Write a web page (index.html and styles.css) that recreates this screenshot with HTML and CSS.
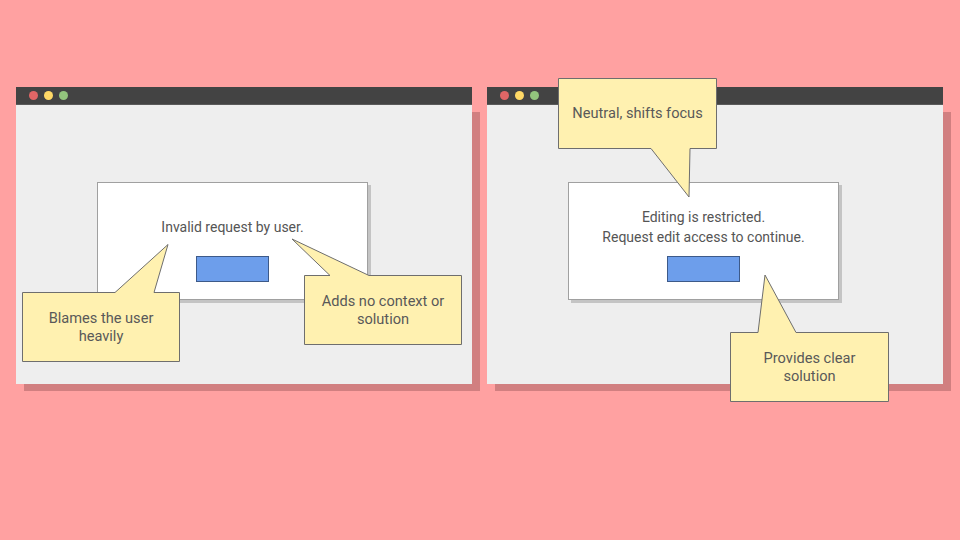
FILE: index.html
```html
<!DOCTYPE html>
<html>
<head>
<meta charset="utf-8">
<link rel="stylesheet" href="styles.css">
</head>
<body>
<div class="stage">
  <div class="window">
    <div class="bar">
      <span class="dot red"></span><span class="dot yellow"></span><span class="dot green"></span>
    </div>
    <div class="content">
      <div class="dialog">
        <div class="msg">Invalid request by user.</div>
        <div class="btn"></div>
      </div>
    </div>
    <div class="callout c1">
      <svg class="shape" width="158" height="70"><polygon points="0.5,0.5 93,0.5 146,-47.5 132,0.5 157.5,0.5 157.5,69.5 0.5,69.5"/></svg>
      <span class="ctext">Blames the user<br>heavily</span>
    </div>
    <div class="callout c2">
      <svg class="shape" width="158" height="70"><polygon points="0.5,0.5 26,0.5 -12,-36 65,0.5 157.5,0.5 157.5,69.5 0.5,69.5"/></svg>
      <span class="ctext">Adds no context or<br>solution</span>
    </div>
  </div>
  <div class="window">
    <div class="bar">
      <span class="dot red"></span><span class="dot yellow"></span><span class="dot green"></span>
    </div>
    <div class="content">
      <div class="dialog">
        <div class="msg">Editing is restricted.<br>Request edit access to continue.</div>
        <div class="btn"></div>
      </div>
    </div>
    <div class="callout c3">
      <svg class="shape" width="159" height="71"><polygon points="0.5,0.5 158.5,0.5 158.5,70.5 132,70.5 131,119 93,70.5 0.5,70.5"/></svg>
      <span class="ctext">Neutral, shifts focus</span>
    </div>
    <div class="callout c4">
      <svg class="shape" width="159" height="70"><polygon points="0.5,0.5 28,0.5 35,-57 66,0.5 158.5,0.5 158.5,69.5 0.5,69.5"/></svg>
      <span class="ctext">Provides clear<br>solution</span>
    </div>
  </div>
</div>
</body>
</html>
```
FILE: styles.css
```css
html, body {
  margin: 0;
  padding: 0;
}
body {
  width: 960px;
  height: 540px;
  background: #ffa1a1;
  font-family: Roboto, "Liberation Sans", sans-serif;
  overflow: hidden;
}
.stage {
  display: flex;
  gap: 15px;
  padding: 87px 0 0 16px;
}
.window {
  position: relative;
  width: 456px;
}
.bar {
  height: 18px;
  background: #434343;
  display: flex;
  align-items: center;
  gap: 6px;
  padding-left: 13px;
  box-sizing: border-box;
  border-bottom: 1px solid #5a5a5a;
}
.dot {
  width: 9px;
  height: 9px;
  border-radius: 50%;
}
.red { background: #e06666; }
.yellow { background: #ffd966; }
.green { background: #93c47d; }
.content {
  height: 279px;
  background: #eeeeee;
  box-shadow: 8px 7px 0 #d17f80;
  padding: 77px 0 0 81px;
  box-sizing: border-box;
}
.dialog {
  width: 271px;
  height: 118px;
  box-sizing: border-box;
  background: #ffffff;
  border: 1px solid #a0a0a0;
  box-shadow: 3px 3px 0 #c4c4c4;
  display: flex;
  flex-direction: column;
  align-items: center;
  padding-top: 19px;
}
.msg {
  height: 50px;
  display: flex;
  align-items: center;
  text-align: center;
  font-size: 14px;
  line-height: 20px;
  color: #555555;
}
.btn {
  margin-top: 4px;
  width: 73px;
  height: 26px;
  box-sizing: border-box;
  background: #6d9eeb;
  border: 1px solid #3d5a89;
}
.callout {
  position: absolute;
  display: flex;
  align-items: center;
  justify-content: center;
  text-align: center;
  z-index: 2;
}
.shape {
  position: absolute;
  left: 0;
  top: 0;
  overflow: visible;
}
.shape polygon {
  fill: #fff1b0;
  stroke: #6e6e6e;
  stroke-width: 1;
}
.ctext {
  position: relative;
  font-size: 14.6px;
  line-height: 18.5px;
  color: #595959;
}
.c1 { left: 6px; top: 205px; width: 158px; height: 70px; }
.c2 { left: 288px; top: 188px; width: 158px; height: 70px; }
.c3 { left: 71px; top: -9px; width: 159px; height: 71px; }
.c4 { left: 243px; top: 245px; width: 159px; height: 70px; }
```
